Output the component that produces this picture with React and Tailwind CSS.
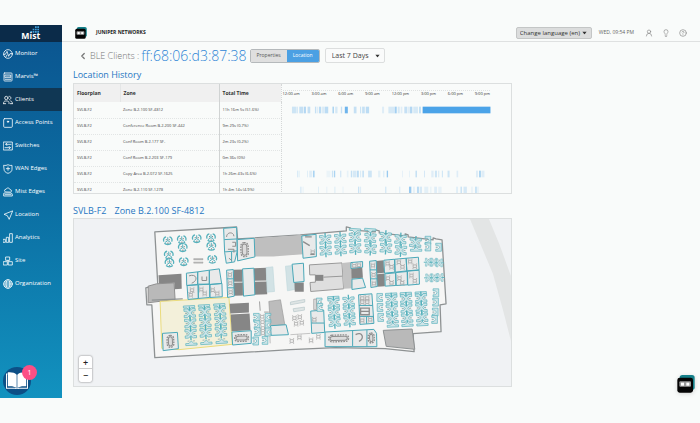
import React, { useState } from 'react';
import clsx from 'clsx';
import { ChevronLeft, CircleHelp, Lightbulb, UserRound } from 'lucide-react';

const NavIcon = ({ children }) => (
    <svg viewBox="0 0 30 30" className="size-[10px] shrink-0" fill="none" stroke="currentColor" strokeWidth="2.4" strokeLinejoin="round" strokeLinecap="round">
        {children}
    </svg>
);

const navItems = [
    { label: 'Monitor', icon: <><circle cx="15" cy="15" r="13" /><path d="M2 16h5l5-9 5 15 4-8h7M9 23l3-5" /></> },
    { label: 'Marvis™', icon: <><rect x="3" y="3" width="24" height="24" rx="2" /><rect x="7" y="9" width="16" height="8" /><path d="M12 12v2M18 12v2M7 22h16" /></> },
    { label: 'Clients', icon: <><circle cx="10" cy="9" r="5" /><path d="M2 26v-3c0-4 3-5 8-5s8 1 8 5v3M18 4c7-1 8 8 2 10M23 18c4 1 5 3 5 8M2 26h6M22 26h6" /></> },
    { label: 'Access Points', icon: <><rect x="2" y="2" width="26" height="26" rx="3" /><circle cx="15" cy="11" r="2" fill="currentColor" /></> },
    { label: 'Switches', icon: <><rect x="2" y="3" width="26" height="24" /><path d="M24 10H8l4-4M8 10l4 3M6 20h16l-4-4M22 20l-4 4" /></> },
    { label: 'WAN Edges', icon: <><path d="M3 4c5 1 8 0 12-2 4 2 7 3 12 2v12c0 6-5 10-12 12C8 26 3 22 3 16z" /><path d="M15 9v10M10 14h10" /></> },
    { label: 'Mist Edges', icon: <><path d="M6 14c-4-3-1-8 3-7 2-6 11-5 12 1 6 0 6 6 3 7z" /><path d="M4 18h21l3 4v5H2v-5zM6 23h18" /></> },
    { label: 'Location', icon: <path d="M28 3 3 13l10 4 5 10z" /> },
    { label: 'Analytics', icon: <><rect x="1" y="19" width="6" height="9" /><rect x="11" y="13" width="6" height="15" /><rect x="21" y="2" width="7" height="26" /></> },
    { label: 'Site', icon: <><rect x="9" y="3" width="11" height="10" /><rect x="2" y="17" width="11" height="10" /><rect x="17" y="17" width="11" height="10" /><path d="M15 13v4" /></> },
    { label: 'Organization', icon: <><circle cx="15" cy="15" r="13" /><ellipse cx="15" cy="15" rx="6" ry="13" /><path d="M4 9h22M2 15h26M4 21h22" /></> },
];

const hours = ['12:00 am', '3:00 am', '6:00 am', '9:00 am', '12:00 pm', '3:00 pm', '6:00 pm', '9:00 pm'];

// visits: [start, width, opacity]
const zones = [
    {
        zone: 'Zone B.2.100 SF-4812',
        total: '11h 16m 5s (51.6%)',
        visits: [
            [48, 12, 0.25], [61, 5, 0.2], [70, 12, 0.3], [84, 6, 0.4], [95, 8, 0.3], [117, 4, 0.3], [123, 3, 0.15],
            [129, 7, 0.35], [139, 5, 0.2], [146, 11, 0.35], [170, 4, 0.5], [178, 7, 0.2], [195, 4, 0.3], [207, 9, 0.8],
            [234, 8, 0.3], [253, 3, 0.3], [259, 8, 0.3], [270, 10, 0.35], [319, 6, 0.15], [338, 18, 0.2], [357, 6, 0.5],
            [366, 6, 0.2], [375, 5, 0.15], [386, 8, 0.3], [395, 5, 0.15], [402, 8, 0.4], [413, 14, 0.2], [431, 4, 0.45],
            [441, 204, 1],
        ],
    },
    { zone: 'Conference Room B.2.200 SF-442', total: '9m 29s (0.7%)', visits: [] },
    { zone: 'Conf Room B.2.177 SF-', total: '2m 23s (0.2%)', visits: [] },
    { zone: 'Conf Room B.2.203 SF-179', total: '0m 36s (0%)', visits: [] },
    {
        zone: 'Copy Area B.2.072 SF-1625',
        total: '1h 26m 43s (6.6%)',
        visits: [
            [64, 3, 0.25], [69, 2, 0.15], [94, 2, 0.2], [100, 8, 0.15], [111, 5, 0.45], [152, 12, 0.08], [168, 3, 0.3],
            [174, 4, 0.45], [194, 2, 0.4], [213, 5, 0.1], [225, 4, 0.3], [231, 10, 0.2], [243, 6, 0.35], [253, 3, 0.2],
            [260, 4, 0.35], [277, 11, 0.25], [307, 7, 0.12], [322, 4, 0.15], [333, 4, 0.55], [379, 2, 0.15], [400, 3, 0.1],
            [420, 3, 0.45], [446, 2, 0.3], [467, 7, 0.15], [478, 6, 0.25], [488, 3, 0.2], [499, 2, 0.4], [516, 6, 0.25],
            [543, 5, 0.15], [603, 3, 0.3], [611, 5, 0.5], [618, 9, 0.15],
        ],
    },
    {
        zone: 'Zone B.2.110 SF-1278',
        total: '1h 4m 14s (4.9%)',
        visits: [
            [72, 5, 0.15], [80, 3, 0.1], [127, 2, 0.2], [152, 2, 0.15], [175, 4, 0.12], [200, 3, 0.1], [247, 3, 0.3],
            [252, 4, 0.15], [328, 4, 0.2], [370, 4, 0.15], [400, 7, 0.55], [413, 4, 0.15], [424, 6, 0.35], [432, 7, 0.2],
            [446, 12, 0.12], [465, 2, 0.2], [476, 8, 0.15], [488, 10, 0.1], [543, 3, 0.25], [555, 4, 0.3], [564, 10, 0.2],
            [588, 3, 0.15], [600, 3, 0.5], [606, 3, 0.15],
        ],
    },
];

const Robot = ({ className }) => (
    <svg viewBox="0 0 54 54" className={className}>
        <rect x="8" y="0" width="45" height="45" rx="8" fill="#15808a" />
        <rect x="1" y="8" width="47" height="45" rx="7" fill="#050505" />
        <rect x="7" y="19" width="35" height="16" rx="3" fill="#9b9b9b" />
        <rect x="12" y="23" width="9" height="9" fill="#fff" />
        <rect x="28" y="23" width="9" height="9" fill="#fff" />
    </svg>
);

// four desks around a shared spine
const Pod = ({ x, y, r = -3, s = 1 }) => (
    <g transform={`translate(${x} ${y}) rotate(${r}) scale(${s})`} stroke="#56b1bc">
        <path d="M0-20V20" strokeWidth="4" />
        <path d="M-17-13h10L0-6l7-7h10v7H9L4 0l5 6h8v7H7L0 6l-7 7h-10V6h8l5-6-5-6h-8z" fill="#cfe4e7" strokeWidth="2" />
        <path d="M-14 0h6M8 0h6" stroke="#9db4b7" strokeWidth="4" />
    </g>
);

const PodEnd = ({ x, y, r = -3 }) => (
    <g transform={`translate(${x} ${y}) rotate(${r})`} stroke="#56b1bc">
        <path d="M-17-5h34v6H7L0 8l-7-7h-10z" fill="#cfe4e7" strokeWidth="2" />
        <path d="M-11 8h6M5 8h6" stroke="#9db4b7" strokeWidth="3" />
    </g>
);

const RoundDesk = ({ x, y }) => (
    <g transform={`translate(${x} ${y})`} stroke="#56b1bc" strokeWidth="3">
        <path d="M-12 3c-3-9 2-13 7-14M12 3c3-9-2-13-7-14M-10 8c5 5 15 5 20 0" fill="none" strokeWidth="4" />
        <path d="M0-10V0l-9 6M0 0l9 6" fill="none" />
        <path d="M-6-3h3M3-3h3M-1 8h3" stroke="#808c8e" strokeWidth="4" />
    </g>
);

const SideDesk = ({ x, y, flip }) => (
    <g transform={`translate(${x} ${y}) scale(${flip ? -1 : 1} 1)`}>
        <path d="M-9-12H8v24H-9V6h7l5-6-5-6h-7z" fill="#cfe4e7" stroke="#56b1bc" strokeWidth="2" />
        <path d="M-9 0h6" stroke="#9db4b7" strokeWidth="4" />
    </g>
);

// small meeting table with chairs
const Seats = ({ x, y }) => (
    <g transform={`translate(${x} ${y})`} stroke="#9a9a9a" strokeWidth="2" fill="none">
        <path d="M-5-4h10v8H-5zM-7-7h3M4-7h3M-7 7h3M4 7h3" />
    </g>
);

const OvalTable = ({ x, y, rx, ry }) => (
    <g transform={`translate(${x} ${y}) rotate(-2)`} stroke="#8d8d8d" fill="none">
        <rect x={-rx - 4} y={-ry - 4} width={rx * 2 + 8} height={ry * 2 + 8} rx="10" strokeWidth="4" strokeDasharray="5 3" />
        <rect x={-rx} y={-ry} width={rx * 2} height={ry * 2} rx="8" strokeWidth="3" fill="#dcdcdc" />
    </g>
);

const FloorPlan = () => (
    <svg viewBox="73 219 438 167" className="block w-full h-auto" role="img" aria-label="Floor plan SVLB-F2">
        <path d="M470 219h19l10 24 12 33v65l-8-31-10-36z" fill="#e3e5e5" />
        <path
            d="M154 232 236 227l1 12 63-4 46-4v-4l4 1v2l25 2v-2l4 1v2l26 3v-2l3 1v2l25 3v-2l3 1 6 1 4 64-6 1 1 27-28 2 1 18-29-3-50-1-45 2-136 8-3-53h-5l-1-17 12-3z"
            fill="#f6f6f5" stroke="#8e9293" strokeWidth="1.3" strokeLinejoin="round"
        />

        <g transform="translate(140 215) scale(.33333)">
            {[[81, 77], [123, 74], [168, 71], [211, 68], [126, 98], [212, 94], [84, 120], [86, 144], [129, 140], [215, 133]].map(([x, y]) => (
                <RoundDesk key={`${x}-${y}`} x={x} y={y} />
            ))}
            <path d="M159 131h28v4h-28zM159 141h28v4h-28zM75 333h27v4H75zM75 343h27v4H75z" fill="#bbb" stroke="#999" strokeWidth="1" />

            {/* core blocks */}
            <path d="M340 70l158-11v58l-100 8h-58z" fill="#bfbfbf" />
            <path d="M53 181l69-4 1 45-22 1v-19l-46 4z" fill="#868686" />
            <path d="M22 214l25-7 53-3 3 50-81 10z" fill="#b9b9b9" stroke="#909090" strokeWidth="3" />
            <path d="M33 256l93-4" stroke="#8e9293" strokeWidth="4" />
            <path d="M279 165l27-1v37h-27zM280 204l27-1v39l-27 1zM340 160l37-1 1 38-38 1zM341 201l39-1v38l-38 2z" fill="#868686" />
            <path d="M377 158l20-2 5 74-22 2zM435 154l22-2 6 72-22 4z" fill="#d2e2e5" stroke="#c0d8dc" strokeWidth="2" />

            {/* selected zone */}
            <path d="M58 260l207-12 10 141-160 16-52-4z" fill="#f3f0da" stroke="#eadb7b" strokeWidth="3" />
            <path d="M267 267l58-3v29l-56 3zM270 299l57-3 3 51-57 3z" fill="#868686" />
            <path d="M385 260l35-5 13 75-43 4z" fill="#bcbcbc" stroke="#999" strokeWidth="2" />

            <g fill="#e9eaea" stroke="#4aa8b8" strokeWidth="3">
                <path d="M249 40l39-3 2 72-8 32-25 4-5-33z" />
                <path d="M251 74l38-2M252 111l37-3M273 111v30" />
                <path d="M290 74l51-4 2 56-52 12z" />
                <path d="M137 175l34-4v38l-33 3zM171 171l35-5v42h-35zM206 166l30-4 7 44-37 3zM139 212l33-2 1 41-31 3zM173 210l34-2v40l-34 3zM208 209l36-3 1 40-37 2z" />
                <path d="M258 166l20-2 3 80-20 4zM259 192h20M261 219h19" />
                <path d="M306 162l34-2 3 80-34 4z" />
                <path d="M65 356l45-3 3 49-46 6z" />
                <path d="M274 352l58-4v38l-56 5z" />
                <path d="M390 333l47-3 7 30-52 2z" />
            </g>
            <OvalTable x={312} y={104} rx={7} ry={17} />
            <OvalTable x={89} y={380} rx={6} ry={14} />
            <OvalTable x={303} y={370} rx={17} ry={6} />
            <path d="M258 66c0-16 22-16 22-2M262 103h18v10M265 130l8 6M275 82h10v12h-10M145 183c24-8 28 15 8 22M184 185v12h14v-12" fill="none" stroke="#8d8d8d" strokeWidth="3" />
            {[[154, 226], [150, 240], [182, 224], [192, 236], [216, 226], [230, 236], [268, 180], [269, 205], [270, 232]].map(([x, y]) => (
                <Seats key={`${x}-${y}`} x={x} y={y} />
            ))}

            {[147, 192, 238].map((x, i) => (
                <g key={x}>
                    <PodEnd x={x - 2} y={278 - i * 3} />
                    <Pod x={x} y={295 - i * 3} />
                    <Pod x={x + 2} y={326 - i * 3} />
                    <Pod x={x + 3} y={357 - i * 3} />
                    <PodEnd x={x + 5} y={387 - i * 3} r={177} />
                </g>
            ))}
            {[[348, 308], [350, 330], [351, 351], [346, 379], [374, 377]].map(([x, y]) => (
                <SideDesk key={`${x}-${y}`} x={x} y={y} />
            ))}
            {[308, 331, 352].map((y) => <SideDesk key={y} x={382} y={y} flip />)}
            {[[365, 306], [366, 322], [367, 340], [367, 355]].map(([x, y]) => (
                <Seats key={`${x}-${y}`} x={x} y={y} />
            ))}
            <path d="M357 260l2 28M371 292h14" stroke="#a0a0a0" strokeWidth="3" />
            <path d="M388 363l1 23" stroke="#bbb" strokeWidth="3" />
        </g>

        <g transform="translate(290 215) scale(.33333)">
            <path d="M57 150l98-6 5 78-99 8-2-27 16-1v-22H58z" fill="#dedede" stroke="#999" strokeWidth="3" />
            <path d="M75 180h24v18H75z" fill="#868686" />
            <path d="M99 187l57-3" stroke="#999" strokeWidth="3" />
            <path d="M156 144l27-3 5 79-28 2z" fill="#c3c3c3" />
            <path d="M12 203h28v28H13zM183 161l33-2 2 30-34 3zM258 138l22-2 2 38-23 2zM260 178l23-2 1 38-23 2z" fill="#868686" />
            <path d="M279 347l87-4 8 61-86-9z" fill="#b9b9b9" stroke="#8e9293" strokeWidth="3" />

            <g fill="#e9eaea" stroke="#4aa8b8" strokeWidth="3">
                <path d="M34 63l43-5 1 67-40 5z" />
                <path d="M5 148l34-3 2 55-31 3z" />
                <path d="M182 143l35-3v17l-35 4zM185 193l32-3 9 28-41 6z" />
                <path d="M238 139l20-2 3 78-19 3zM239 165h20M241 192h20" />
                <path d="M281 136l32-3 1 39-31 3zM314 133l34-3 2 38-35 4zM348 130l37-3 2 38-37 3zM284 177l32-3 1 38-32 2zM317 173l34-3 1 40-34 2zM352 169l35-3 1 42-35 3z" />
                <path d="M61 289l39-3 3 67-39 3zM63 325h38" />
                <path d="M104 352l147-8 8 12 1 40H104zM187 348v46M230 346v49" />
                <path d="M205 240l40-3 6 89-42 3zM206 272h41M208 305h41M229 306v21" />
            </g>
            <OvalTable x={145} y={371} rx={26} ry={6} />
            <OvalTable x={243} y={370} rx={5} ry={11} />
            <path d="M196 360c20-12 28 12 10 20M38 80l20 12M44 66h20M60 118h12M211 280h26v20h-26zM211 290h26" fill="none" stroke="#8d8d8d" strokeWidth="4" />
            {[[67, 112], [192, 153], [206, 151], [248, 152], [250, 180], [251, 206], [292, 146], [304, 156], [326, 142], [337, 156], [360, 140], [374, 154], [293, 190], [304, 204], [328, 190], [336, 204], [364, 182], [374, 198], [216, 250], [231, 262], [216, 262], [231, 250], [216, 317], [240, 315], [72, 315], [12, 310], [28, 307], [17, 327], [34, 324], [27, 368], [4, 379], [62, 377], [84, 366]].map(([x, y]) => (
                <Seats key={`${x}-${y}`} x={x} y={y} />
            ))}
            <path d="M0 262l43-8v8L0 270zM8 282l34-5v9l-32 5z" fill="#dfe5e5" stroke="#b5c5c8" strokeWidth="2" />
            <path d="M0 360l60-4" stroke="#aaa" strokeWidth="2" />

            {[[105, 74], [150, 71], [194, 67], [240, 69], [286, 66], [331, 73]].map(([x, y], i) => (
                <g key={x}>
                    <Pod x={x} y={y} r={i > 2 ? 4 : -3} />
                    <Pod x={x + 1} y={y + 33} r={i > 2 ? 4 : -3} />
                </g>
            ))}
            {[194, 240].map((x) => <PodEnd key={x} x={x} y={46} r={4} />)}
            <Pod x={376} y={83} r={5} />
            <PodEnd x={378} y={104} r={180} />
            {[[414, 76], [414, 96], [446, 97]].map(([x, y]) => <SideDesk key={`${x}-${y}`} x={x} y={y} />)}
            {[[415, 142], [432, 142], [448, 144], [416, 189], [433, 189], [450, 188]].map(([x, y]) => (
                <Pod key={`${x}-${y}`} x={x} y={y} r={90} s={0.7} />
            ))}

            {[[130, 250], [175, 246], [304, 240], [348, 238], [393, 236]].map(([x, y], i) => (
                <g key={x}>
                    {i !== 1 && <PodEnd x={x - 1} y={y} />}
                    <Pod x={x} y={y + 14} />
                    <Pod x={x + 1} y={y + 43} />
                    <Pod x={x + 3} y={y + 72} />
                    {i > 1 && <PodEnd x={x + 4} y={y + 92} r={177} />}
                </g>
            ))}
            {[[268, 248], [269, 278], [271, 308], [86, 262], [88, 278], [438, 234], [437, 262], [436, 292], [434, 314]].map(([x, y]) => (
                <SideDesk key={`${x}-${y}`} x={x} y={y} flip={x < 280} />
            ))}
            <path d="M70 253h8v32h-8z" fill="#ddd" stroke="#999" strokeWidth="2" />
        </g>
    </svg>
);

const Caret = () => (
    <svg viewBox="0 0 6 4" className="absolute right-[5px] top-1/2 -translate-y-1/2 w-[5px] h-[3px] pointer-events-none">
        <path d="M0 0h6L3 4z" fill="#333" />
    </svg>
);

const Sidebar = () => (
    <nav className="relative w-[62px] shrink-0 bg-linear-to-b from-[#0b548f] via-[#0c70a4] to-[#1292bf] text-white">
        <div className="h-[17px] bg-[#0b2b49] flex justify-center">
            <svg viewBox="0 0 60 51" className="h-[17px] w-[20px]" role="img" aria-label="Mist">
                <g fill="#3f9fd8">
                    <path d="M28 18h5v5h-5zM35 11h5v5h-5zM35 18h5v5h-5zM42 4h5v5h-5zM42 11h5v5h-5zM42 18h5v5h-5zM49 4h5v5h-5zM49 11h5v5h-5zM49 18h5v5h-5z" />
                </g>
                <text x="1" y="43" fill="#fff" fontSize="26" fontWeight="700" fontFamily="Open Sans, sans-serif">Mist</text>
            </svg>
        </div>
        <ul>
            {navItems.map(({ label, icon }) => (
                <li key={label}>
                    <a href="#" className={clsx('flex items-center gap-[2px] h-[23px] pl-[3px] text-[6px] font-medium whitespace-nowrap', label === 'Clients' && 'bg-[#103754]')}>
                        <NavIcon>{icon}</NavIcon>
                        {label}
                    </a>
                </li>
            ))}
        </ul>
        <button aria-label="Guides" className="absolute left-[3px] bottom-[3px] size-7 rounded-full bg-[#0d4f86] flex items-center justify-center">
            <svg viewBox="0 0 64 50" className="w-[22px] h-[17px]">
                <path d="M4 6h-3v42h26l5 2 5-2h26V6h-3" fill="#0d4f86" stroke="#fff" strokeWidth="3" />
                <path d="M5 1c11-1 20 1 26 7v39C24 42 16 41 5 42zM59 1C48 0 39 2 33 8v39c7-5 15-6 26-5z" fill="#fff" />
            </svg>
            <span className="absolute -top-[2px] left-[19px] size-[15px] rounded-full bg-[#fc4f85] text-[7px] leading-[15px] text-center">1</span>
        </button>
    </nav>
);

const App = () => {
    const [tab, setTab] = useState('Location');

    return (
        <div className="bg-[#f9fbfa] pt-[25px] pb-[25px] font-['Open_Sans',sans-serif] text-[#444]">
            <div className="relative flex">
                <Sidebar />
                <div className="flex-1 min-w-0">
                    <header className="h-[17px] border-b border-[#dfe1e1] flex items-center pl-[13px] pr-[13px]">
                        <Robot className="size-[12px]" />
                        <span className="ml-[9px] text-[5px] font-bold text-[#222]">JUNIPER NETWORKS</span>
                        <div className="ml-auto flex items-center">
                            <div className="relative">
                                <select aria-label="Change language" className="appearance-none block w-[76px] h-[12px] pl-[3px] rounded-xs border border-[#c4c6c6] bg-[#dcdddd] text-[6px] leading-[10px] text-[#333]">
                                    <option>Change language (en)</option>
                                </select>
                                <Caret />
                            </div>
                            <span className="ml-[7px] text-[5px] text-[#666]">WED, 09:54 PM</span>
                            <div className="ml-[11px] flex gap-[9px] text-[#888]">
                                <button aria-label="Account"><UserRound size={8} strokeWidth={2} /></button>
                                <button aria-label="Tips"><Lightbulb size={8} strokeWidth={2} /></button>
                                <button aria-label="Help"><CircleHelp size={8} strokeWidth={2} /></button>
                            </div>
                        </div>
                    </header>

                    <main className="pl-[11px] pb-[11px]">
                        <div className="flex items-center h-[27px] pl-[5px]">
                            <a href="#" className="flex items-center text-[9px] font-light text-[#777] whitespace-nowrap">
                                <ChevronLeft size={10} strokeWidth={3} className="mr-[2px]" />
                                BLE Clients :
                            </a>
                            <h1 className="ml-[2px] text-[14px] leading-4 font-light text-[#2f86d6]">ff:68:06:d3:87:38</h1>
                            <div className="ml-[3px] flex rounded-xs border border-[#b5b9bb] overflow-hidden">
                                {['Properties', 'Location'].map((name) => (
                                    <button
                                        key={name}
                                        onClick={() => setTab(name)}
                                        className={clsx('h-3 px-[6px] text-[5px]', tab === name ? 'bg-[#4ba0e3] text-white' : 'bg-[#dfdfdf] text-[#555]')}
                                    >
                                        {name}
                                    </button>
                                ))}
                            </div>
                            <div className="relative ml-[5px]">
                                <select aria-label="Time range" className="appearance-none block w-[60px] h-[15px] pl-[6px] rounded-xs border border-[#dcdede] bg-[#fafbfb] text-[7px] leading-[13px] text-[#444]">
                                    <option>Last 7 Days</option>
                                </select>
                                <Caret />
                            </div>
                        </div>

                        <h2 className="h-[14px] leading-3 text-[9px] text-[#1f76c2]">Location History</h2>
                        <div className="w-[70%] h-[111px] overflow-hidden border border-[#dcdfdf]">
                            <table className="w-full table-fixed text-left text-[4px] leading-[6px] text-[#444]">
                                <colgroup>
                                    <col className="w-[46px]" />
                                    <col className="w-[99px]" />
                                    <col className="w-[62px]" />
                                    <col />
                                </colgroup>
                                <thead>
                                    <tr className="h-[18px] text-[5px] text-[#333]">
                                        <th className="bg-[#f0f0f0] border-r border-[#e4e6e6] pl-[3px]">Floorplan</th>
                                        <th className="bg-[#f0f0f0] border-r border-[#d0d3d3] pl-[3px]">Zone</th>
                                        <th className="bg-[#f0f0f0] pl-[3px]">Total Time</th>
                                        <th className="border-l border-dotted border-[#d5d8d8] pl-px pr-[21px] text-[4px] font-normal">
                                            <div className="flex justify-between border-t border-dotted border-[#dfe2e2] whitespace-nowrap">
                                                {hours.map((hour) => <span key={hour}>{hour}</span>)}
                                            </div>
                                        </th>
                                    </tr>
                                </thead>
                                <tbody>
                                    {zones.map(({ zone, total, visits }) => (
                                        <tr key={zone} className="h-4">
                                            <td className="pl-[3px] border-b border-dotted border-[#e2e5e5]">SVLB-F2</td>
                                            <td className="pl-[3px] border-b border-r border-b-[#e2e5e5] border-r-[#d0d3d3] [border-bottom-style:dotted] whitespace-nowrap">{zone}</td>
                                            <td className="pl-[3px] border-b border-dotted border-[#e2e5e5] whitespace-nowrap">{total}</td>
                                            <td className="border-l border-dotted border-[#d5d8d8]">
                                                <svg viewBox="18 0 690 48" preserveAspectRatio="none" className="block w-full h-4">
                                                    {visits.map(([x, width, opacity]) => (
                                                        <rect key={x} x={x} y="14" width={width} height="20" fill="#4ba3e8" opacity={opacity} />
                                                    ))}
                                                </svg>
                                            </td>
                                        </tr>
                                    ))}
                                </tbody>
                            </table>
                        </div>

                        <h2 className="mt-[10px] h-[14px] leading-[14px] text-[9px] text-[#1f76c2] flex gap-2">
                            <span>SVLB-F2</span>
                            <span>Zone B.2.100 SF-4812</span>
                        </h2>
                        <div className="relative w-[70%] border border-[#dcdfdf] bg-[#f0f2f4]">
                            <FloorPlan />
                            <div className="absolute left-[5px] bottom-1 w-[13px] rounded-xs bg-white shadow-[0_0_2px_#666] text-[9px] font-semibold text-[#222]">
                                <button aria-label="Zoom in" className="block w-full h-[13px] leading-[13px] border-b border-[#ccc]">+</button>
                                <button aria-label="Zoom out" className="block w-full h-[13px] leading-[13px]">−</button>
                            </div>
                        </div>
                    </main>
                </div>

                <button aria-label="Marvis assistant" className="absolute right-[5px] bottom-[5px] drop-shadow-sm">
                    <Robot className="size-[18px]" />
                </button>
            </div>
        </div>
    );
};

export default App;
